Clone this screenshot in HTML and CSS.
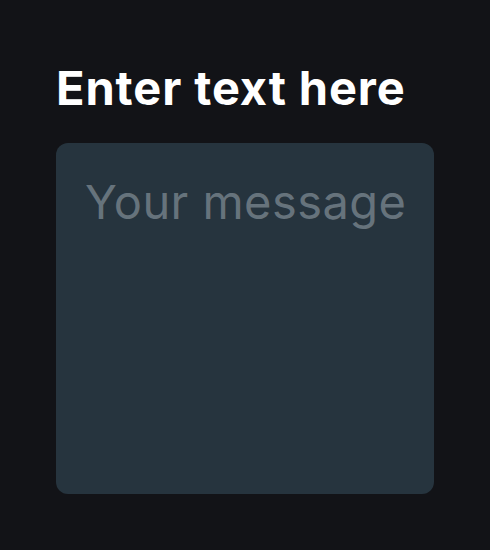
FILE: index.html
```html
<!DOCTYPE html>
<html>
<head>
<meta charset="utf-8">
<link rel="stylesheet" href="styles.css">
</head>
<body>
<main class="page">
  <label class="title" for="msg">Enter text here</label>
  <textarea id="msg" class="message" placeholder="Your message"></textarea>
</main>
</body>
</html>
```
FILE: styles.css
```css
html, body {
  margin: 0;
  background: #121317;
}
body {
  width: 490px;
  height: 550px;
  font-family: "Inter", "Noto Sans", sans-serif;
}
.page {
  display: flex;
  flex-direction: column;
  padding: 60px 56px 0 56px;
  gap: 27px;
}
.title {
  color: #ffffff;
  font-weight: 700;
  font-size: 47px;
  line-height: 56px;
  letter-spacing: 0.9px;
}
.message {
  box-sizing: border-box;
  width: 378px;
  height: 351px;
  margin: 0;
  border: none;
  outline: none;
  resize: none;
  overflow: hidden;
  border-radius: 12px;
  background: #26343e;
  color: #ffffff;
  font-family: inherit;
  font-size: 47px;
  line-height: 56px;
  letter-spacing: 0.45px;
  padding: 31px 8px 31px 29px;
}
.message::placeholder {
  color: #66737c;
}
```
